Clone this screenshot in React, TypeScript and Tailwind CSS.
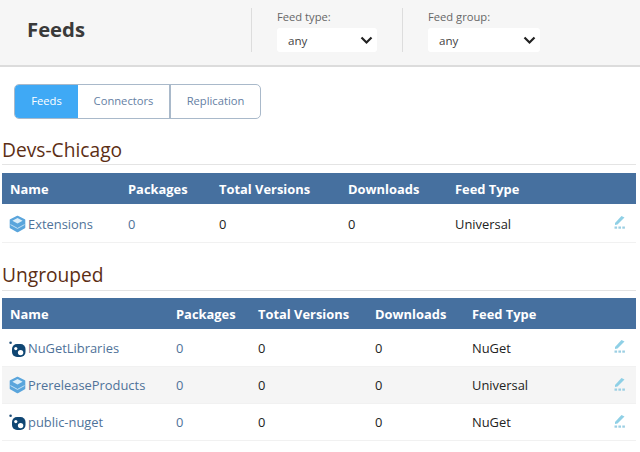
function Chevron() {
  return (
    <svg width="13" height="9" viewBox="0 0 13 9" className="absolute right-[4px] top-[8px]" fill="none">
      <path d="M1.5 1.5 L6.5 6.5 L11.5 1.5" stroke="#222" strokeWidth="2.2" />
    </svg>
  );
}
function Universal() {
  return (
    <svg width="17" height="18" viewBox="0 0 17 18" className="shrink-0 ml-[-1px]">
      <path d="M8.5 1.5 L15.5 5 V12.5 L8.5 16.5 L1.5 12.5 V5 Z" fill="#5aa5dc" stroke="#5aa5dc" strokeWidth="1.6" strokeLinejoin="round" />
      <path d="M8.5 3 L13.6 5.8 L8.5 8.6 L3.4 5.8 Z" fill="#dceefa" />
      <path d="M1.5 9.6 L8.5 13.4 L15.5 9.6" stroke="#cfe6f6" strokeWidth="0.9" fill="none" />
    </svg>
  );
}
function NuGet() {
  return (
    <svg width="17" height="18" viewBox="0 0 17 18" className="shrink-0 ml-[-1px]">
      <circle cx="1.6" cy="2.8" r="1.3" fill="#1f4e79" />
      <rect x="3" y="4" width="13.5" height="13" rx="5" fill="#0f4673" />
      <circle cx="6.8" cy="8.6" r="1.6" fill="#fff" />
      <circle cx="11.6" cy="12.6" r="2.7" fill="#fff" />
    </svg>
  );
}
function Edit() {
  return (
    <svg width="12" height="14" viewBox="0 0 12 14">
      <path d="M1 8 L7.5 1 L10.5 2.5 L3.5 9.5 L1 10 Z" fill="#8fd0e6" />
      <rect x="0.5" y="11.5" width="2.6" height="2.2" fill="#9ccfe3" />
      <rect x="4.4" y="11.5" width="2.6" height="2.2" fill="#9ccfe3" />
      <rect x="8.3" y="11.5" width="2.6" height="2.2" fill="#9ccfe3" />
    </svg>
  );
}
type Row = { name: string; kind: "u" | "n"; type: string };
function FeedTable({ rows, cols }: { rows: Row[]; cols: number[] }) {
  return (
    <table className="w-[634px] ml-[2px] table-fixed border-collapse text-[12.9px]">
      <colgroup>
        {cols.map((c, i) => <col key={i} style={{ width: c }} />)}
      </colgroup>
      <thead>
        <tr className="bg-[#46709f] text-white h-[31px] text-left">
          {["Name", "Packages", "Total Versions", "Downloads", "Feed Type", ""].map((h, i) => (
            <th key={i} className="font-bold pl-[8px] pt-[3px] pb-0 pr-0">{h}</th>
          ))}
        </tr>
      </thead>
      <tbody>
        {rows.map((r, i) => {
          const pad = i === 0 ? "pl-[8px] pt-[3px]" : "pl-[8px] pt-[1px]";
          return (
            <tr key={r.name} className={`border-b border-[#f1f1f1] ${i === 0 ? "h-[38px]" : "h-[37px]"} ${i % 2 === 1 ? "bg-[#f5f5f5]" : "bg-white"}`}>
              <td className={pad}>
                <div className="flex items-center gap-[2px] text-[#4f7299]">
                  {r.kind === "u" ? <Universal /> : <NuGet />}
                  <span>{r.name}</span>
                </div>
              </td>
              <td className={`${pad} text-[#4f7299]`}>0</td>
              <td className={`${pad} text-[#222]`}>0</td>
              <td className={`${pad} text-[#222]`}>0</td>
              <td className={`${pad} text-[#222]`}>{r.type}</td>
              <td className="text-right pr-[10px]"><span className="inline-block align-middle relative bottom-[2px]"><Edit /></span></td>
            </tr>
          );
        })}
      </tbody>
    </table>
  );
}
function Filter({ label, width }: { label: string; width: string }) {
  return (
    <div className="pl-[25px] h-[44px] border-l border-[#dddddd] flex flex-col">
      <div className="text-[11.2px] text-[#666] leading-[16px] mt-[1px]">{label}</div>
      <div className={`relative ${width} h-[24px] bg-white rounded-[3px] mt-[3px] text-[11.6px] text-[#444] pl-[11px] leading-[26px]`}>
        any
        <Chevron />
      </div>
    </div>
  );
}
function Heading({ children, line }: { children: string; line: string }) {
  return (
    <div className={`ml-[2px] w-[634px] border-b border-[#e4e4e4] h-[33px] text-[19.2px] ${line} text-[#5c2e14]`}>{children}</div>
  );
}
export default function App() {
  return (
    <div className="w-[640px] h-[452px] overflow-hidden bg-white" style={{ fontFamily: '"Open Sans", sans-serif' }}>
      <div className="h-[67px] bg-[#f6f6f6] border-b-2 border-[#dcdcdc] flex items-start">
        <div className="w-[251px] pl-[27px] pt-[13px] text-[20.3px] leading-[32px] font-bold text-[#3a3a3a]">Feeds</div>
        <div className="pt-[8px] flex gap-[25px]">
          <Filter label="Feed type:" width="w-[100px]" />
          <Filter label="Feed group:" width="w-[112px]" />
        </div>
      </div>
      <div className="ml-[14px] mt-[17px] w-[247px] h-[35px] flex border border-[#a9b9ca] rounded-[5px] overflow-hidden text-[11.2px]">
        <div className="w-[63px] bg-[#3fa9f5] text-white flex items-center justify-center">Feeds</div>
        <div className="w-[93px] text-[#6580a3] border-r-2 border-[#a9b9ca] flex items-center justify-center">Connectors</div>
        <div className="flex-1 text-[#6580a3] flex items-center justify-center">Replication</div>
      </div>
      <div className="mt-[13px]">
        <Heading line="leading-[35px]">Devs-Chicago</Heading>
      </div>
      <div className="mt-[8px]">
        <FeedTable rows={[{ name: "Extensions", kind: "u", type: "Universal" }]} cols={[118, 91, 129, 107, 140, 49]} />
      </div>
      <div className="mt-[15px]">
        <Heading line="leading-[33px]">Ungrouped</Heading>
      </div>
      <div className="mt-[7px]">
        <FeedTable
          rows={[
            { name: "NuGetLibraries", kind: "n", type: "NuGet" },
            { name: "PrereleaseProducts", kind: "u", type: "Universal" },
            { name: "public-nuget", kind: "n", type: "NuGet" },
          ]}
          cols={[166, 82, 117, 97, 123, 49]}
        />
      </div>
    </div>
  );
}
